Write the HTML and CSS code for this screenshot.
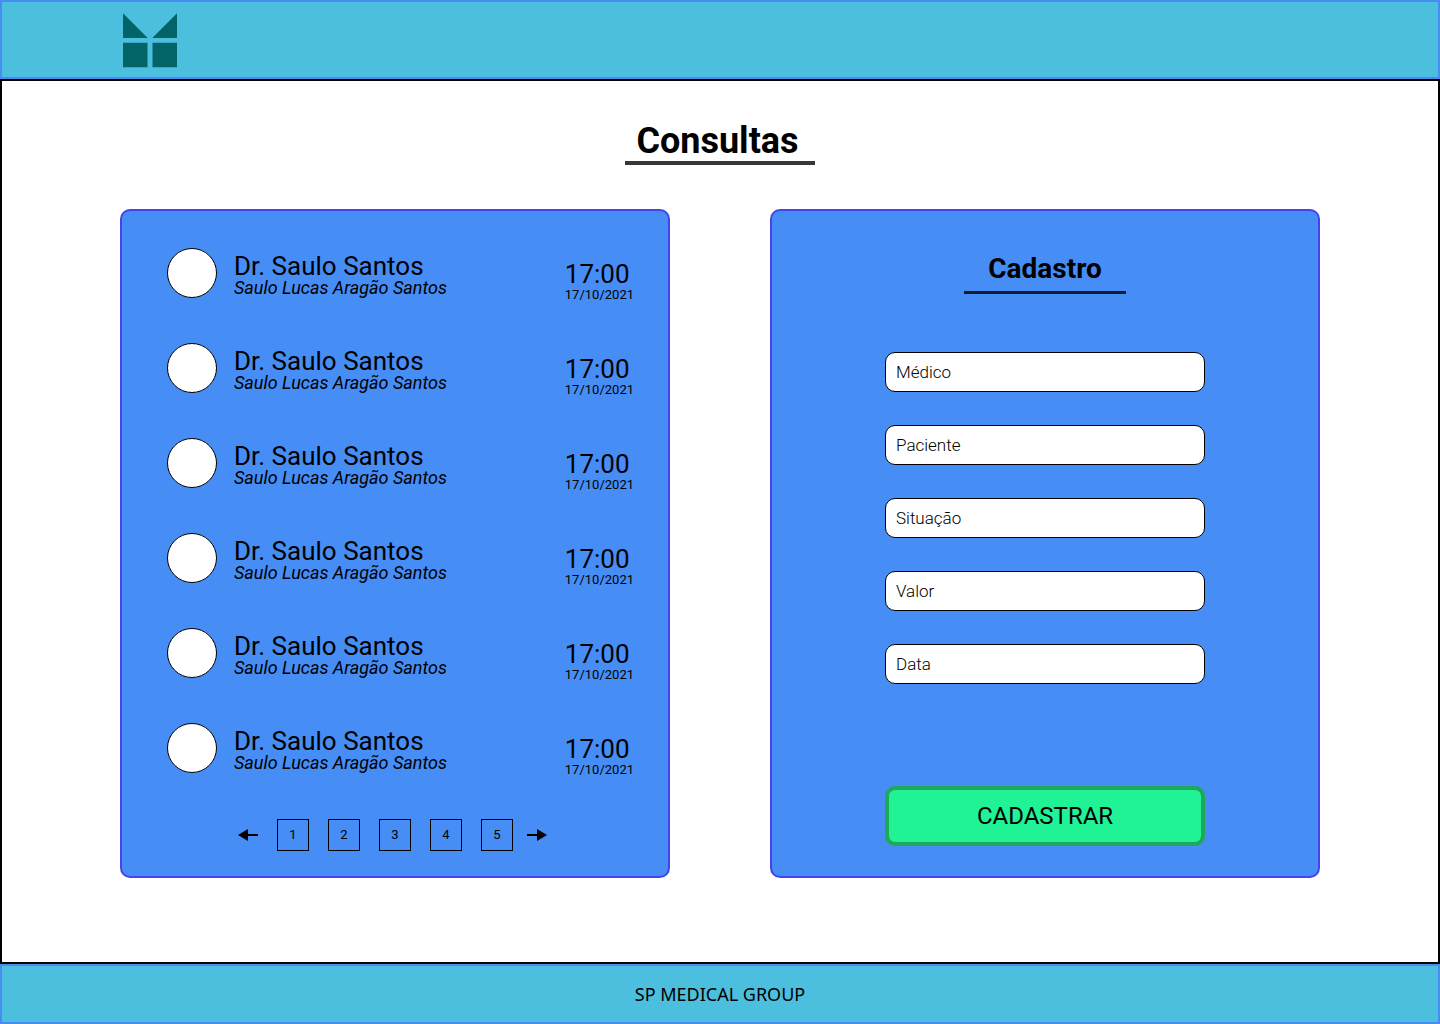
FILE: index.html
```html
<!DOCTYPE html>
<html lang="pt-BR">
<head>
  <meta charset="utf-8">
  <meta name="viewport" content="width=device-width, initial-scale=1">
  <title>SP Medical Group</title>
  <link rel="stylesheet" href="styles.css">
</head>
<body>
  <header class="site-header">
    <a class="logo" href="#" aria-label="SP Medical Group">
      <svg width="54" height="54" viewBox="0 0 54 54" fill="currentColor" aria-hidden="true">
        <path d="M0 0.300L24.700 25H0ZM54 0.300V25H29.300ZM0 29.700H24.500V54.300H0ZM29.500 29.700H54V54.300H29.500Z"/>
      </svg>
    </a>
  </header>

  <main class="content">
    <h1 class="page-title">Consultas</h1>
    <div class="panels">
      <section class="panel list-panel">
        <ul class="appointments">
          <li class="appointment">
            <span class="avatar"></span>
            <div class="people"><p class="doctor">Dr. Saulo Santos</p><p class="patient">Saulo Lucas Aragão Santos</p></div>
            <div class="when"><p class="time">17:00</p><p class="date">17/10/2021</p></div>
          </li>
          <li class="appointment">
            <span class="avatar"></span>
            <div class="people"><p class="doctor">Dr. Saulo Santos</p><p class="patient">Saulo Lucas Aragão Santos</p></div>
            <div class="when"><p class="time">17:00</p><p class="date">17/10/2021</p></div>
          </li>
          <li class="appointment">
            <span class="avatar"></span>
            <div class="people"><p class="doctor">Dr. Saulo Santos</p><p class="patient">Saulo Lucas Aragão Santos</p></div>
            <div class="when"><p class="time">17:00</p><p class="date">17/10/2021</p></div>
          </li>
          <li class="appointment">
            <span class="avatar"></span>
            <div class="people"><p class="doctor">Dr. Saulo Santos</p><p class="patient">Saulo Lucas Aragão Santos</p></div>
            <div class="when"><p class="time">17:00</p><p class="date">17/10/2021</p></div>
          </li>
          <li class="appointment">
            <span class="avatar"></span>
            <div class="people"><p class="doctor">Dr. Saulo Santos</p><p class="patient">Saulo Lucas Aragão Santos</p></div>
            <div class="when"><p class="time">17:00</p><p class="date">17/10/2021</p></div>
          </li>
          <li class="appointment">
            <span class="avatar"></span>
            <div class="people"><p class="doctor">Dr. Saulo Santos</p><p class="patient">Saulo Lucas Aragão Santos</p></div>
            <div class="when"><p class="time">17:00</p><p class="date">17/10/2021</p></div>
          </li>
        </ul>
        <nav class="pagination" aria-label="Páginas">
          <button class="arrow" type="button" aria-label="Anterior">
            <svg width="20" height="12" viewBox="0 0 20 12" aria-hidden="true"><path d="M0 6L10 0V5H20V7H10V12Z"/></svg>
          </button>
          <div class="pages">
            <button class="page" type="button">1</button>
            <button class="page" type="button">2</button>
            <button class="page" type="button">3</button>
            <button class="page" type="button">4</button>
            <button class="page" type="button">5</button>
          </div>
          <button class="arrow" type="button" aria-label="Próxima">
            <svg width="20" height="12" viewBox="0 0 20 12" aria-hidden="true"><path d="M20 6L10 0V5H0V7H10V12Z"/></svg>
          </button>
        </nav>
      </section>

      <section class="panel form-panel">
        <h2 class="form-title">Cadastro</h2>
        <form class="form">
          <div class="fields">
            <input class="field" type="text" placeholder="Médico" aria-label="Médico">
            <input class="field" type="text" placeholder="Paciente" aria-label="Paciente">
            <input class="field" type="text" placeholder="Situação" aria-label="Situação">
            <input class="field" type="text" placeholder="Valor" aria-label="Valor">
            <input class="field" type="text" placeholder="Data" aria-label="Data">
          </div>
          <button class="submit" type="button">CADASTRAR</button>
        </form>
      </section>
    </div>
  </main>

  <footer class="site-footer">SP MEDICAL GROUP</footer>
</body>
</html>
```
FILE: styles.css
```css
* {
  box-sizing: border-box;
}

body {
  margin: 0;
  min-height: 100vh;
  display: flex;
  flex-direction: column;
  background: #fff;
  color: #000;
  font-family: Roboto, "Liberation Sans", sans-serif;
}

h1, h2, p, ul {
  margin: 0;
  padding: 0;
}

button, input {
  font-family: inherit;
  color: inherit;
}

button {
  cursor: pointer;
}

.site-header, .site-footer {
  background: #4cbfdf;
  border: 2px solid #468df6;
}

.site-header {
  padding: 11px 121px 10px;
}

.logo {
  display: block;
  width: 54px;
  color: #036468;
}

.logo svg {
  display: block;
  overflow: visible;
}

.content {
  flex: 1;
  display: flex;
  flex-direction: column;
  align-items: center;
  padding: 40px 118px 84px;
  border: 2px solid #000;
}

.page-title {
  width: 190px;
  margin-bottom: 44px;
  padding-right: 5px;
  border-bottom: 4px solid #383838;
  font-size: 36px;
  line-height: 40px;
  text-align: center;
}

.panels {
  width: 100%;
  flex: 1;
  display: grid;
  grid-template-columns: 1fr 1fr;
  gap: 100px;
}

.panel {
  background: #468df6;
  border: 2px solid #4543eb;
  border-radius: 10px;
}

.list-panel {
  padding: 37px 34px 25px 45px;
}

.appointments {
  display: flex;
  flex-direction: column;
  gap: 45px;
  list-style: none;
}

.appointment {
  display: flex;
  height: 50px;
  gap: 17px;
}

.avatar {
  width: 50px;
  height: 50px;
  background: #fff;
  border: 1px solid #000;
  border-radius: 50%;
}

.people {
  flex: 1;
  padding-top: 6px;
}

.when {
  padding-top: 14px;
}

.doctor, .time {
  font-size: 26px;
  line-height: 24px;
}

.patient {
  font-size: 18px;
  font-style: italic;
  line-height: 20px;
}

.date {
  font-size: 13px;
  line-height: 18px;
}

.pagination {
  display: flex;
  justify-content: center;
  align-items: center;
  margin-top: 46px;
  padding-right: 16px;
}

.pages {
  display: flex;
  gap: 19px;
  margin: 0 14px 0 19px;
}

.page {
  width: 32px;
  height: 32px;
  padding: 0 0 2px;
  background: none;
  border: 1px solid #000;
  font-size: 13px;
}

.arrow {
  padding: 0;
  background: none;
  border: 0;
}

.arrow svg {
  display: block;
}

.form-panel {
  display: flex;
  flex-direction: column;
  align-items: center;
  padding: 42px 20px 30px;
}

.form-title {
  width: 162px;
  margin-bottom: 58px;
  padding-bottom: 6px;
  border-bottom: 3px solid #0e1c31;
  font-size: 28px;
  line-height: 32px;
  text-align: center;
}

.form {
  width: 100%;
  max-width: 320px;
  flex: 1;
  display: flex;
  flex-direction: column;
  justify-content: space-between;
  gap: 40px;
}

.fields {
  display: flex;
  flex-direction: column;
  gap: 33px;
}

.field {
  width: 100%;
  height: 40px;
  padding: 0 10px;
  background: #fff;
  border: 1px solid #000;
  border-radius: 10px;
  font-size: 17px;
  font-weight: 300;
}

.field::placeholder {
  color: #000;
  opacity: 1;
}

.submit {
  height: 60px;
  background: #20f396;
  border: 4px solid #1ea858;
  border-radius: 10px;
  font-size: 24px;
}

.site-footer {
  padding: 16px;
  font-family: "Noto Sans", sans-serif;
  font-size: 18px;
  line-height: 24px;
  text-align: center;
}
```
